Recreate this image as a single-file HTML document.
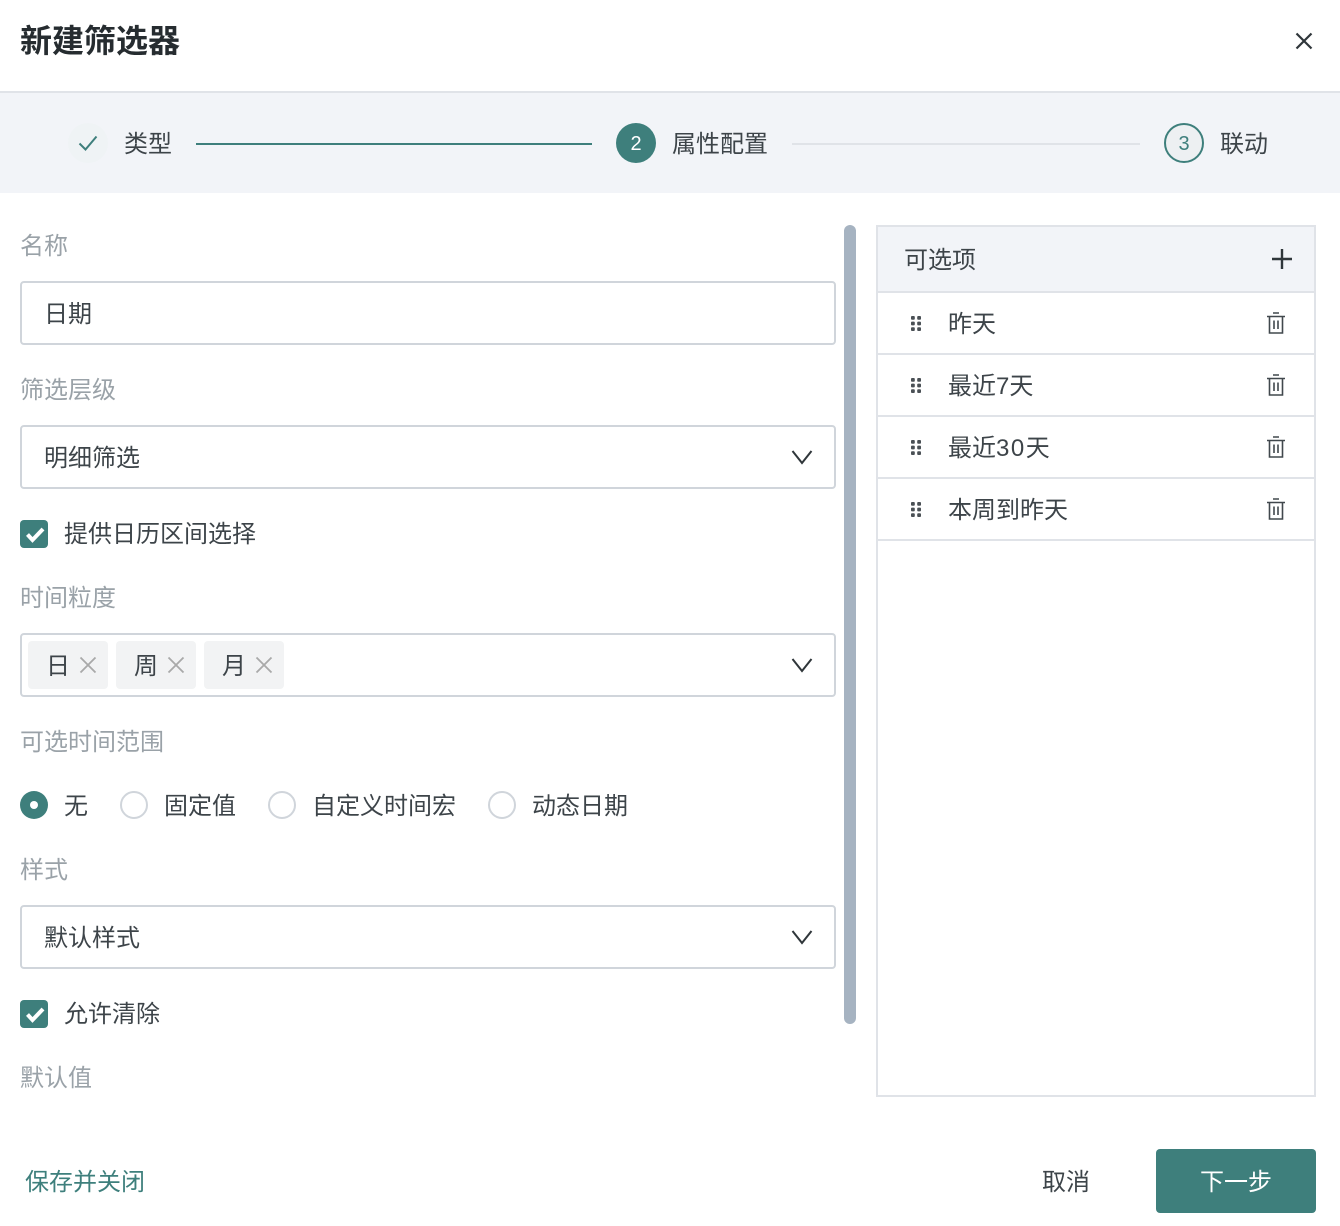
<!DOCTYPE html>
<html lang="zh">
<head>
<meta charset="utf-8">
<style>
html,body{margin:0;padding:0;background:#fff}
body{width:1340px;height:1226px;position:relative;overflow:hidden;font-family:"Liberation Sans","Noto Sans CJK SC",sans-serif;color:#3d4449}
.a{position:absolute}
.t{position:absolute;font-size:24px;line-height:32px;white-space:nowrap}
.l{color:#9aa2a8}
.box{position:absolute;left:20px;width:816px;height:64px;box-sizing:border-box;border:2px solid #d0d5db;border-radius:4px;background:#fff}
.chev{position:absolute;left:791px;width:22px;height:14px}
.cb{position:absolute;left:20px;width:28px;height:28px;background:#3e7f7c;border-radius:4px}
.tag{position:absolute;top:641px;width:80px;height:48px;background:#f2f3f4;border-radius:4px}
.rad{position:absolute;top:791px;width:28px;height:28px;box-sizing:border-box;border:2px solid #d0d5db;border-radius:50%;background:#fff}
.hr{position:absolute;left:878px;width:436px;height:2px;background:#e0e3e8}
svg{position:absolute;display:block;overflow:visible}
</style>
</head>
<body>
<div class="t" style="left:20px;top:19px;font-size:32px;line-height:44px;font-weight:700;color:#262c30">新建筛选器</div>
<svg style="left:1296px;top:33px" width="16" height="16" viewBox="0 0 16 16"><path d="M0.5 0.5L15.5 15.5M15.5 0.5L0.5 15.5" stroke="#2f363a" stroke-width="2.2" fill="none"/></svg>

<div class="a" style="left:0;top:91px;width:1340px;height:2px;background:#e0e3e8"></div>
<div class="a" style="left:0;top:93px;width:1340px;height:100px;background:#f2f4f8"></div>

<div class="a" style="left:68px;top:123px;width:40px;height:40px;border-radius:50%;background:#eff3f5"></div>
<svg style="left:79px;top:135px" width="18" height="16" viewBox="0 0 18 16"><path d="M0.5 8.5L6.5 14.5L17.5 1.5" stroke="#3e7f7c" stroke-width="2" fill="none"/></svg>
<div class="t" style="left:124px;top:129px">类型</div>
<div class="a" style="left:196px;top:143px;width:396px;height:2px;background:#3e7f7c"></div>

<div class="a" style="left:616px;top:123px;width:40px;height:40px;border-radius:50%;background:#3e7f7c;color:#fff;font-size:20px;line-height:42px;text-align:center">2</div>
<div class="t" style="left:672px;top:129px">属性配置</div>
<div class="a" style="left:792px;top:143px;width:348px;height:2px;background:#e0e3e8"></div>

<div class="a" style="left:1164px;top:123px;width:40px;height:40px;box-sizing:border-box;border:2px solid #3e7f7c;border-radius:50%;background:#edf0f2;color:#3e7f7c;font-size:20px;line-height:38px;text-align:center">3</div>
<div class="t" style="left:1220px;top:129px">联动</div>

<div class="t l" style="left:20px;top:231px">名称</div>
<div class="box" style="top:281px"></div>
<div class="t" style="left:44px;top:299px">日期</div>

<div class="t l" style="left:20px;top:375px">筛选层级</div>
<div class="box" style="top:425px"></div>
<div class="t" style="left:44px;top:443px">明细筛选</div>
<svg class="chev" style="top:449.5px" viewBox="0 0 22 14"><path d="M1.5 1L11 13L20.5 1" stroke="#2f363a" stroke-width="2" fill="none"/></svg>

<div class="cb" style="top:520px"></div>
<svg style="left:20px;top:520px" width="28" height="28" viewBox="0 0 28 28"><path d="M7.5 14.5L12.5 20L23 9" stroke="#fff" stroke-width="4" fill="none"/></svg>
<div class="t" style="left:64px;top:519px">提供日历区间选择</div>

<div class="t l" style="left:20px;top:583px">时间粒度</div>
<div class="box" style="top:633px"></div>
<div class="tag" style="left:28px"></div>
<div class="tag" style="left:116px"></div>
<div class="tag" style="left:204px"></div>
<div class="t" style="left:46px;top:651px">日</div>
<div class="t" style="left:134px;top:651px">周</div>
<div class="t" style="left:222px;top:651px">月</div>
<svg style="left:80px;top:657px" width="16" height="16" viewBox="0 0 16 16"><path d="M0.5 0.5L15.5 15.5M15.5 0.5L0.5 15.5" stroke="#a9a9a9" stroke-width="1.8" fill="none"/></svg>
<svg style="left:168px;top:657px" width="16" height="16" viewBox="0 0 16 16"><path d="M0.5 0.5L15.5 15.5M15.5 0.5L0.5 15.5" stroke="#a9a9a9" stroke-width="1.8" fill="none"/></svg>
<svg style="left:256px;top:657px" width="16" height="16" viewBox="0 0 16 16"><path d="M0.5 0.5L15.5 15.5M15.5 0.5L0.5 15.5" stroke="#a9a9a9" stroke-width="1.8" fill="none"/></svg>
<svg class="chev" style="top:657.5px" viewBox="0 0 22 14"><path d="M1.5 1L11 13L20.5 1" stroke="#2f363a" stroke-width="2" fill="none"/></svg>

<div class="t l" style="left:20px;top:727px">可选时间范围</div>
<div class="a" style="left:20px;top:791px;width:28px;height:28px;border-radius:50%;background:#3e7f7c"></div>
<div class="a" style="left:30px;top:801px;width:8px;height:8px;border-radius:50%;background:#fff"></div>
<div class="t" style="left:64px;top:791px">无</div>
<div class="rad" style="left:120px"></div>
<div class="t" style="left:164px;top:791px">固定值</div>
<div class="rad" style="left:268px"></div>
<div class="t" style="left:312px;top:791px">自定义时间宏</div>
<div class="rad" style="left:488px"></div>
<div class="t" style="left:532px;top:791px">动态日期</div>

<div class="t l" style="left:20px;top:855px">样式</div>
<div class="box" style="top:905px"></div>
<div class="t" style="left:44px;top:923px">默认样式</div>
<svg class="chev" style="top:929.5px" viewBox="0 0 22 14"><path d="M1.5 1L11 13L20.5 1" stroke="#2f363a" stroke-width="2" fill="none"/></svg>

<div class="cb" style="top:1000px"></div>
<svg style="left:20px;top:1000px" width="28" height="28" viewBox="0 0 28 28"><path d="M7.5 14.5L12.5 20L23 9" stroke="#fff" stroke-width="4" fill="none"/></svg>
<div class="t" style="left:64px;top:999px">允许清除</div>

<div class="t l" style="left:20px;top:1063px">默认值</div>

<div class="a" style="left:844px;top:225px;width:12px;height:799px;border-radius:6px;background:#a6b3c1"></div>

<div class="a" style="left:876px;top:225px;width:440px;height:872px;box-sizing:border-box;border:2px solid #e0e3e8;background:#fff"></div>
<div class="a" style="left:878px;top:227px;width:436px;height:64px;background:#f2f4f8"></div>
<div class="t" style="left:904px;top:245px">可选项</div>
<svg style="left:1272px;top:249px" width="20" height="20" viewBox="0 0 20 20"><path d="M10 0V20M0 10H20" stroke="#2f363a" stroke-width="2.4" fill="none"/></svg>
<div class="hr" style="top:291px"></div>
<div class="hr" style="top:353px"></div>
<div class="hr" style="top:415px"></div>
<div class="hr" style="top:477px"></div>
<div class="hr" style="top:539px"></div>

<svg style="left:911px;top:315.5px" width="10" height="15" viewBox="0 0 10 15" fill="#4a5055"><rect x="0" y="0" width="3.8" height="3.8" rx="1"/><rect x="6.2" y="0" width="3.8" height="3.8" rx="1"/><rect x="0" y="5.6" width="3.8" height="3.8" rx="1"/><rect x="6.2" y="5.6" width="3.8" height="3.8" rx="1"/><rect x="0" y="11.2" width="3.8" height="3.8" rx="1"/><rect x="6.2" y="11.2" width="3.8" height="3.8" rx="1"/></svg>
<div class="t" style="left:948px;top:309px">昨天</div>
<svg style="left:1267px;top:312px" width="18" height="22" viewBox="0 0 18 22" fill="none" stroke="#41484d" stroke-width="1.6"><path d="M0 4.5H18M6 1H12M2.5 4.5V21H15.5V4.5M7 8.5V17M11 8.5V17"/></svg>

<svg style="left:911px;top:377.5px" width="10" height="15" viewBox="0 0 10 15" fill="#4a5055"><rect x="0" y="0" width="3.8" height="3.8" rx="1"/><rect x="6.2" y="0" width="3.8" height="3.8" rx="1"/><rect x="0" y="5.6" width="3.8" height="3.8" rx="1"/><rect x="6.2" y="5.6" width="3.8" height="3.8" rx="1"/><rect x="0" y="11.2" width="3.8" height="3.8" rx="1"/><rect x="6.2" y="11.2" width="3.8" height="3.8" rx="1"/></svg>
<div class="t" style="left:948px;top:371px">最近7天</div>
<svg style="left:1267px;top:374px" width="18" height="22" viewBox="0 0 18 22" fill="none" stroke="#41484d" stroke-width="1.6"><path d="M0 4.5H18M6 1H12M2.5 4.5V21H15.5V4.5M7 8.5V17M11 8.5V17"/></svg>

<svg style="left:911px;top:439.5px" width="10" height="15" viewBox="0 0 10 15" fill="#4a5055"><rect x="0" y="0" width="3.8" height="3.8" rx="1"/><rect x="6.2" y="0" width="3.8" height="3.8" rx="1"/><rect x="0" y="5.6" width="3.8" height="3.8" rx="1"/><rect x="6.2" y="5.6" width="3.8" height="3.8" rx="1"/><rect x="0" y="11.2" width="3.8" height="3.8" rx="1"/><rect x="6.2" y="11.2" width="3.8" height="3.8" rx="1"/></svg>
<div class="t" style="left:948px;top:433px">最近<span style="letter-spacing:1.5px">30</span>天</div>
<svg style="left:1267px;top:436px" width="18" height="22" viewBox="0 0 18 22" fill="none" stroke="#41484d" stroke-width="1.6"><path d="M0 4.5H18M6 1H12M2.5 4.5V21H15.5V4.5M7 8.5V17M11 8.5V17"/></svg>

<svg style="left:911px;top:501.5px" width="10" height="15" viewBox="0 0 10 15" fill="#4a5055"><rect x="0" y="0" width="3.8" height="3.8" rx="1"/><rect x="6.2" y="0" width="3.8" height="3.8" rx="1"/><rect x="0" y="5.6" width="3.8" height="3.8" rx="1"/><rect x="6.2" y="5.6" width="3.8" height="3.8" rx="1"/><rect x="0" y="11.2" width="3.8" height="3.8" rx="1"/><rect x="6.2" y="11.2" width="3.8" height="3.8" rx="1"/></svg>
<div class="t" style="left:948px;top:495px">本周到昨天</div>
<svg style="left:1267px;top:498px" width="18" height="22" viewBox="0 0 18 22" fill="none" stroke="#41484d" stroke-width="1.6"><path d="M0 4.5H18M6 1H12M2.5 4.5V21H15.5V4.5M7 8.5V17M11 8.5V17"/></svg>

<div class="t" style="left:25px;top:1167px;color:#3e7f7c">保存并关闭</div>
<div class="t" style="left:1042px;top:1167px">取消</div>
<div class="a" style="left:1156px;top:1149px;width:160px;height:64px;background:#3e7f7c;border-radius:4px"></div>
<div class="t" style="left:1200px;top:1167px;color:#fff">下一步</div>
</body>
</html>
